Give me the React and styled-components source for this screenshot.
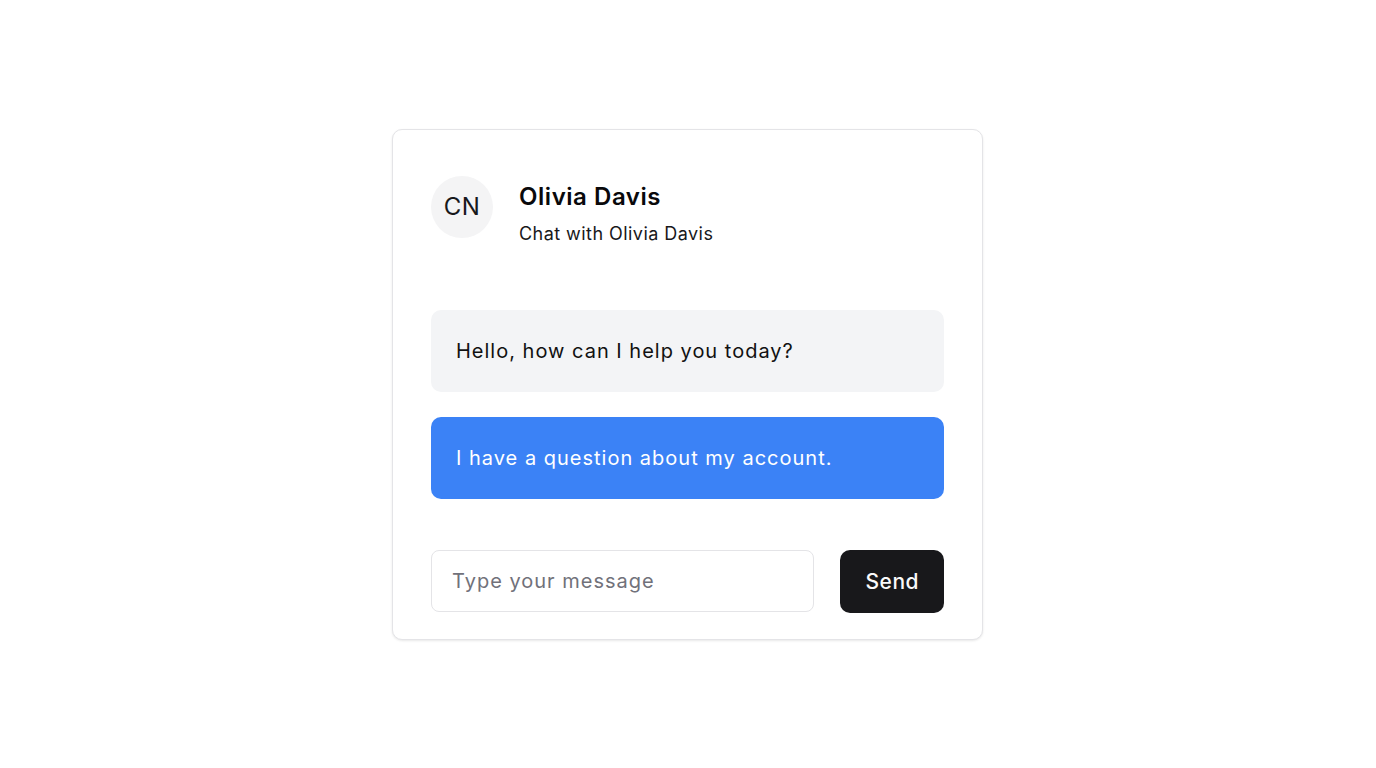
import React from 'react';
import styled, { createGlobalStyle } from 'styled-components';

const GlobalStyle = createGlobalStyle`
  * {
    box-sizing: border-box;
  }

  body {
    margin: 0;
    background: #ffffff;
    font-family: Inter, "Noto Sans", sans-serif;
    color: #09090b;
  }
`;

const Page = styled.div`
  min-height: 100vh;
  display: flex;
  align-items: center;
  justify-content: center;
  padding-right: 1px;
`;

const Card = styled.div`
  width: 591px;
  display: flex;
  flex-direction: column;
  padding: 46px 38px 26px;
  border: 1px solid #e4e4e7;
  border-radius: 10px;
  background: #ffffff;
  box-shadow: 0 1px 3px rgba(0, 0, 0, 0.06), 0 1px 2px rgba(0, 0, 0, 0.04);
`;

const Header = styled.div`
  display: flex;
  align-items: flex-start;
  gap: 26px;
`;

const Avatar = styled.div`
  width: 62px;
  height: 62px;
  flex-shrink: 0;
  border-radius: 50%;
  background: #f4f4f5;
  display: flex;
  align-items: center;
  justify-content: center;
  font-size: 24px;
  letter-spacing: 0.4px;
  color: #18181b;
`;

const Titles = styled.div`
  display: flex;
  flex-direction: column;
`;

const Name = styled.h2`
  margin: 0;
  font-size: 24px;
  line-height: 42px;
  font-weight: 600;
  letter-spacing: 0.55px;
  color: #09090b;
`;

const Subtitle = styled.p`
  margin: 0;
  font-size: 18px;
  line-height: 32px;
  letter-spacing: 0.45px;
  color: #18181b;
`;

const Messages = styled.div`
  display: flex;
  flex-direction: column;
  gap: 25px;
  margin-top: 60px;
`;

const Bubble = styled.div`
  padding: 26px 25px;
  border-radius: 10px;
  font-size: 20px;
  line-height: 30px;
  letter-spacing: 1px;
  background: ${({ mine }) => (mine ? '#3b82f6' : '#f3f4f6')};
  color: ${({ mine }) => (mine ? '#ffffff' : '#111111')};
`;

const Composer = styled.form`
  display: flex;
  align-items: center;
  gap: 26px;
  margin-top: 51px;
`;

const Input = styled.input`
  flex: 1;
  min-width: 0;
  height: 62px;
  padding: 0 20px;
  border: 1px solid #e4e4e7;
  border-radius: 8px;
  font-family: inherit;
  font-size: 20px;
  letter-spacing: 1px;
  color: #09090b;
  outline: none;

  &::placeholder {
    color: #71717a;
  }
`;

const SendButton = styled.button`
  height: 63px;
  padding: 0 25px;
  border: none;
  border-radius: 10px;
  background: #18181b;
  color: #fafafa;
  font-family: inherit;
  font-size: 21px;
  font-weight: 500;
  letter-spacing: 0.5px;
  cursor: pointer;
`;

const messages = [
  { id: 1, text: 'Hello, how can I help you today?', mine: false },
  { id: 2, text: 'I have a question about my account.', mine: true },
];

export default function App() {
  return (
    <>
      <GlobalStyle />
      <Page>
        <Card>
          <Header>
            <Avatar>CN</Avatar>
            <Titles>
              <Name>Olivia Davis</Name>
              <Subtitle>Chat with Olivia Davis</Subtitle>
            </Titles>
          </Header>
          <Messages>
            {messages.map((m) => (
              <Bubble key={m.id} mine={m.mine}>
                {m.text}
              </Bubble>
            ))}
          </Messages>
          <Composer onSubmit={(e) => e.preventDefault()}>
            <Input placeholder="Type your message" />
            <SendButton type="submit">Send</SendButton>
          </Composer>
        </Card>
      </Page>
    </>
  );
}
